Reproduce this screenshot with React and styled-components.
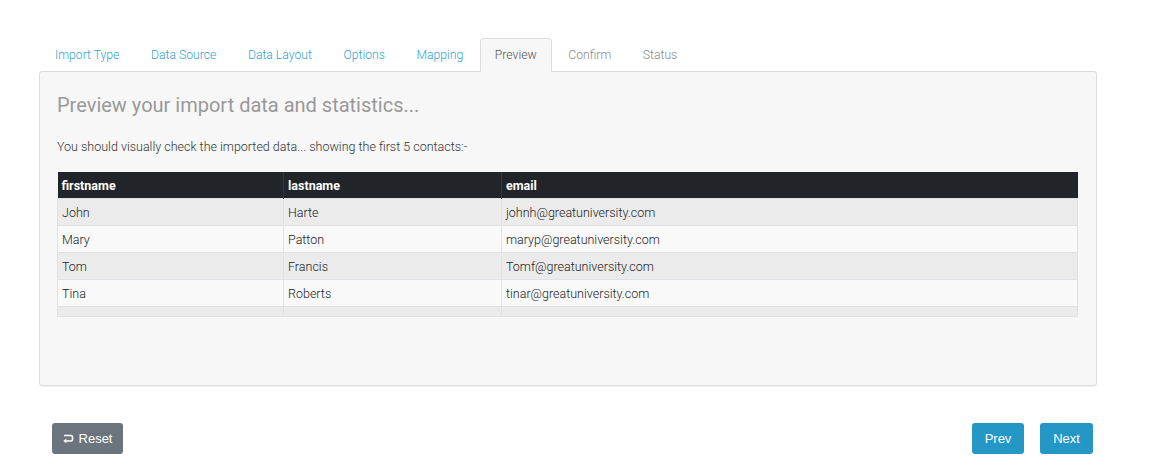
import React from 'react';
import styled, { createGlobalStyle } from 'styled-components';

const GlobalStyle = createGlobalStyle`
  html, body {
    margin: 0;
    padding: 0;
    background: #fff;
    font-family: Roboto, "Liberation Sans", sans-serif;
  }
`;

const Page = styled.div`
  width: 1150px;
  height: 468px;
  box-sizing: border-box;
  padding: 38px 53px 0 39px;
`;

const Tabs = styled.ul`
  display: flex;
  list-style: none;
  margin: 0;
  padding: 0 0 0 1px;
  height: 33px;
  position: relative;
  z-index: 1;
`;

const Tab = styled.li`
  box-sizing: border-box;
  height: 34px;
  padding: 0 14px 0 14px;
  margin-right: 1.6px;
  display: flex;
  align-items: center;
  font-size: 12.2px;
  font-weight: 300;
  color: ${p => (p.$active ? '#555' : p.$disabled ? '#888' : '#2f9fd0')};
  border: 1px solid ${p => (p.$active ? '#ddd' : 'transparent')};
  border-bottom-color: ${p => (p.$active ? '#f7f7f7' : 'transparent')};
  border-radius: 4px 4px 0 0;
  background: ${p => (p.$active ? '#f7f7f7' : 'transparent')};
`;

const Panel = styled.div`
  box-sizing: border-box;
  height: 315px;
  background: #f7f7f7;
  border: 1px solid #ddd;
  border-radius: 3px;
  box-shadow: 0 1px 1px rgba(0, 0, 0, 0.06);
  padding: 18px 18px 0 17px;
`;

const Title = styled.h3`
  margin: 0;
  font-size: 20px;
  font-weight: 400;
  color: #999;
  line-height: 30px;
`;

const Intro = styled.p`
  margin: 18px 0 16px;
  font-size: 12.5px;
  font-weight: 300;
  color: #333;
  line-height: 18px;
`;

const TableWrap = styled.div`
  height: 144px;
  overflow: hidden;
  border-bottom: 1px solid #dee2e6;
`;

const Table = styled.table`
  width: 1021px;
  border-collapse: collapse;
  font-size: 12.5px;
  table-layout: fixed;
`;

const Th = styled.th`
  background: #212529;
  color: #fff;
  font-weight: 700;
  text-align: left;
  height: 26px;
  padding: 0 4px;
  border-left: 1px solid #32383e;
  &:first-child { border-left: none; }
`;

const Row = styled.tr`
  background: ${p => (p.$odd ? '#ebebeb' : '#f9f9f9')};
`;

const Td = styled.td`
  height: 26px;
  padding: 0 4px;
  font-weight: 300;
  color: #222;
  border: 1px solid #dee2e6;
`;

const Footer = styled.div`
  display: flex;
  justify-content: space-between;
  align-items: center;
  padding: 37px 4px 0 13px;
`;

const Button = styled.button`
  height: 31px;
  box-sizing: border-box;
  border: none;
  border-radius: 3px;
  padding: 0;
  font-family: "Liberation Sans", Arial, sans-serif;
  font-size: 13px;
  color: #fff;
  background: ${p => (p.$variant === 'secondary' ? '#6c757d' : '#2597c7')};
  display: inline-flex;
  align-items: center;
  justify-content: center;
  gap: 5px;
  width: ${p => p.$w}px;

  svg { flex-shrink: 0; }
`;

const Group = styled.div`
  display: flex;
  gap: 16px;
`;

const ResetIcon = () => (
  <svg width="11" height="9" viewBox="0 0 11 9">
    <path d="M1 1.5 H8 Q9.5 1.5 9.5 3 V5.5 Q9.5 7 8 7 H2.5" fill="none" stroke="#fff" strokeWidth="1.6" />
    <path d="M0.3 7 L3.3 4.6 L3.3 9.4 Z" fill="#fff" />
  </svg>
);

const tabs = [
  { label: 'Import Type' },
  { label: 'Data Source' },
  { label: 'Data Layout' },
  { label: 'Options' },
  { label: 'Mapping' },
  { label: 'Preview', active: true },
  { label: 'Confirm', disabled: true },
  { label: 'Status', disabled: true },
];

const rows = [
  ['John', 'Harte', 'johnh@greatuniversity.com'],
  ['Mary', 'Patton', 'maryp@greatuniversity.com'],
  ['Tom', 'Francis', 'Tomf@greatuniversity.com'],
  ['Tina', 'Roberts', 'tinar@greatuniversity.com'],
  ['', '', ''],
];

export default function App() {
  return (
    <Page>
      <GlobalStyle />
      <Tabs>
        {tabs.map(t => (
          <Tab key={t.label} $active={t.active} $disabled={t.disabled}>{t.label}</Tab>
        ))}
      </Tabs>
      <Panel>
        <Title>Preview your import data and statistics...</Title>
        <Intro>You should visually check the imported data... showing the first 5 contacts:-</Intro>
        <TableWrap>
          <Table>
            <colgroup>
              <col style={{ width: 226 }} />
              <col style={{ width: 218 }} />
              <col />
            </colgroup>
            <thead>
              <tr>
                <Th>firstname</Th>
                <Th>lastname</Th>
                <Th>email</Th>
              </tr>
            </thead>
            <tbody>
              {rows.map((r, i) => (
                <Row key={i} $odd={i % 2 === 0}>
                  <Td>{r[0]}</Td>
                  <Td>{r[1]}</Td>
                  <Td>{r[2]}</Td>
                </Row>
              ))}
            </tbody>
          </Table>
        </TableWrap>
      </Panel>
      <Footer>
        <Button $variant="secondary" $w={71}><ResetIcon />Reset</Button>
        <Group>
          <Button $w={52}>Prev</Button>
          <Button $w={53}>Next</Button>
        </Group>
      </Footer>
    </Page>
  );
}
